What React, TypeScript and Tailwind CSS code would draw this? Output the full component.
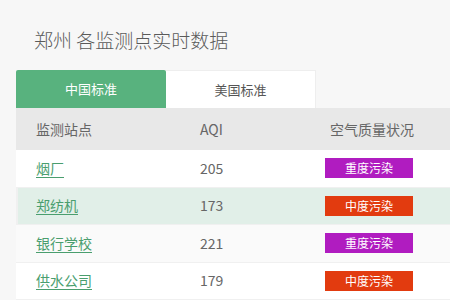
import React from "react";

type Row = { name: string; aqi: number; level: "重度污染" | "中度污染" };

const ROWS: Row[] = [
  { name: "烟厂", aqi: 205, level: "重度污染" },
  { name: "郑纺机", aqi: 173, level: "中度污染" },
  { name: "银行学校", aqi: 221, level: "重度污染" },
  { name: "供水公司", aqi: 179, level: "中度污染" },
];

const FONT = { fontFamily: '"Noto Sans CJK SC", "Noto Sans", sans-serif' };

export default function App() {
  return (
    <div className="h-[300px] w-[450px] overflow-hidden bg-[#f7f7f7] text-[#666]" style={FONT}>
      <h1 className="pl-[34px] pt-[27px] text-[19px] leading-[26px] font-light text-[#5a5a5a]">
        郑州 各监测点实时数据
      </h1>

      <div className="ml-4 mt-[17px]">
        {/* tabs */}
        <div className="flex h-[38px] text-[13px]">
          <div className="flex w-[150px] items-center justify-center rounded-t-[2px] bg-[#58b27e] text-white">
            中国标准
          </div>
          <div className="flex w-[150px] items-center justify-center border-t border-r border-[#eee] bg-white text-[#555]">
            美国标准
          </div>
        </div>

        {/* header */}
        <div className="flex h-[42px] items-center bg-[#e8e8e8] text-[14px] text-[#666]">
          <div className="w-[184px] pl-5">监测站点</div>
          <div className="w-[130px]">AQI</div>
          <div>空气质量状况</div>
        </div>

        {ROWS.map((r, i) => (
          <StationRow key={r.name} row={r} index={i} />
        ))}
      </div>
    </div>
  );
}

function StationRow({ row, index }: { row: Row; index: number }) {
  const active = index === 1;
  const bg = active ? "bg-[#e1efe8] border-l-2 border-[#4f9e72]" : index === 2 ? "bg-[#fafafa]" : "bg-white";
  return (
    <div className={"flex h-[37.5px] items-center border-b border-[#f0f0f0] text-[14px] " + bg}>
      <div className={active ? "w-[182px] pl-[18px]" : "w-[184px] pl-5"}>
        <span className="text-[#4a9e6e] underline decoration-[#4a9e6e] underline-offset-[3px]">{row.name}</span>
      </div>
      <div className="w-[125px] text-[#666]">{row.aqi}</div>
      <div
        className={
          "flex h-5 w-[88px] items-center justify-center text-[12px] text-white " +
          (row.level === "重度污染" ? "bg-[#b01cc0]" : "bg-[#e23b0f]")
        }
      >
        {row.level}
      </div>
    </div>
  );
}
